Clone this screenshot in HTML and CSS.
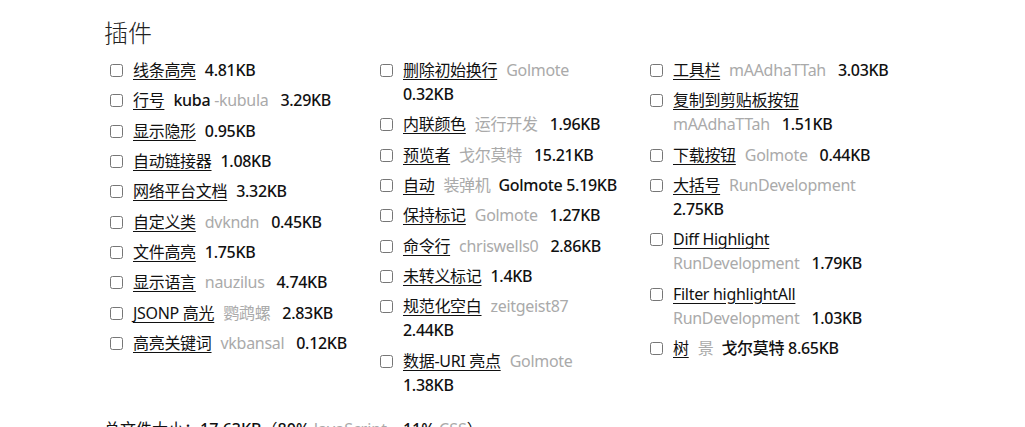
FILE: index.html
```html
<!DOCTYPE html>
<html lang="zh">
<head>
    <meta charset="UTF-8">
    <meta name="viewport" content="width=device-width, initial-scale=1.0">
    <title>插件</title>
    <link rel="stylesheet" href="styles.css">
</head>
<body>

    <div class="page">
        <h2>插件</h2>

        <div class="plugins">
            <ul class="col">
                <li><input type="checkbox"><div class="info"><a href="#">线条高亮</a><span class="size">4.81KB</span></div></li>
                <li><input type="checkbox"><div class="info"><a href="#">行号</a><span class="author"><b>kuba</b> -kubula</span><span class="size">3.29KB</span></div></li>
                <li><input type="checkbox"><div class="info"><a href="#">显示隐形</a><span class="size">0.95KB</span></div></li>
                <li><input type="checkbox"><div class="info"><a href="#">自动链接器</a><span class="size">1.08KB</span></div></li>
                <li><input type="checkbox"><div class="info"><a href="#">网络平台文档</a><span class="size">3.32KB</span></div></li>
                <li><input type="checkbox"><div class="info"><a href="#">自定义类</a><span class="author">dvkndn</span><span class="size">0.45KB</span></div></li>
                <li><input type="checkbox"><div class="info"><a href="#">文件高亮</a><span class="size">1.75KB</span></div></li>
                <li><input type="checkbox"><div class="info"><a href="#">显示语言</a><span class="author">nauzilus</span><span class="size">4.74KB</span></div></li>
                <li><input type="checkbox"><div class="info"><a href="#">JSONP 高光</a><span class="author">鹦鹉螺</span><span class="size">2.83KB</span></div></li>
                <li><input type="checkbox"><div class="info"><a href="#">高亮关键词</a><span class="author">vkbansal</span><span class="size">0.12KB</span></div></li>
            </ul>
            <ul class="col">
                <li><input type="checkbox"><div class="info"><a href="#">删除初始换行</a><span class="author">Golmote</span><span class="size">0.32KB</span></div></li>
                <li><input type="checkbox"><div class="info"><a href="#">内联颜色</a><span class="author">运行开发</span><span class="size">1.96KB</span></div></li>
                <li><input type="checkbox"><div class="info"><a href="#">预览者</a><span class="author">戈尔莫特</span><span class="size">15.21KB</span></div></li>
                <li><input type="checkbox"><div class="info"><a href="#">自动</a><span class="author tight">装弹机</span><span class="size">Golmote 5.19KB</span></div></li>
                <li><input type="checkbox"><div class="info"><a href="#">保持标记</a><span class="author">Golmote</span><span class="size">1.27KB</span></div></li>
                <li><input type="checkbox"><div class="info"><a href="#">命令行</a><span class="author">chriswells0</span><span class="size">2.86KB</span></div></li>
                <li><input type="checkbox"><div class="info"><a href="#">未转义标记</a><span class="size">1.4KB</span></div></li>
                <li><input type="checkbox"><div class="info"><a href="#">规范化空白</a><span class="author">zeitgeist87</span><span class="size">2.44KB</span></div></li>
                <li><input type="checkbox"><div class="info"><a href="#">数据-URI 亮点</a><span class="author">Golmote</span><span class="size">1.38KB</span></div></li>
            </ul>
            <ul class="col">
                <li><input type="checkbox"><div class="info"><a href="#">工具栏</a><span class="author">mAAdhaTTah</span><span class="size">3.03KB</span></div></li>
                <li><input type="checkbox"><div class="info"><a href="#">复制到剪贴板按钮</a><span class="author">mAAdhaTTah</span><span class="size">1.51KB</span></div></li>
                <li><input type="checkbox"><div class="info"><a href="#">下载按钮</a><span class="author">Golmote</span><span class="size">0.44KB</span></div></li>
                <li><input type="checkbox"><div class="info"><a href="#">大括号</a><span class="author">RunDevelopment</span><span class="size">2.75KB</span></div></li>
                <li><input type="checkbox"><div class="info"><a href="#">Diff Highlight</a><span class="author">RunDevelopment</span><span class="size">1.79KB</span></div></li>
                <li><input type="checkbox"><div class="info"><a href="#">Filter highlightAll</a><span class="author">RunDevelopment</span><span class="size">1.03KB</span></div></li>
                <li><input type="checkbox"><div class="info"><a href="#">树</a><span class="author tight">景</span><span class="size">戈尔莫特 8.65KB</span></div></li>
            </ul>
        </div>

        <p class="total">总文件大小：<strong>17.63KB</strong>（<strong>80%</strong> <span class="muted">JavaScript</span>，<strong>11%</strong> <span class="muted">CSS</span>）</p>
    </div>

</body>
</html>
```

FILE: styles.css
```css
body {
    margin: 0;
    padding: 0;
    background-color: #fff;
    color: #111;
    font-family: "Noto Sans", "Noto Sans CJK SC", sans-serif;
    font-size: 16px;
}
.page {
    padding: 17px 0 0 104px;
}
h2 {
    margin: 0;
    font-family: "Noto Sans CJK SC", sans-serif;
    font-size: 24px;
    font-weight: 300;
    line-height: 29px;
    color: #222;
}
.plugins {
    display: flex;
    margin-top: 12px;
}
.col {
    list-style: none;
    margin: 0;
    padding: 0;
    width: 270px;
}
.col li {
    display: flex;
    align-items: flex-start;
    line-height: 24px;
    margin-bottom: 6.33px;
}
.col input[type="checkbox"] {
    width: 13px;
    height: 13px;
    margin: 6px 10px 0 6px;
    flex-shrink: 0;
}
.info {
    width: 222px;
    letter-spacing: -0.3px;
}
.info a {
    color: #111;
    text-decoration: underline;
    text-underline-offset: 3px;
    white-space: nowrap;
    margin-right: 9px;
    display: inline-block;
}
.author {
    color: #aaa;
    white-space: nowrap;
    margin-right: 12px;
    display: inline-block;
}
.author b {
    color: #111;
    font-weight: 500;
}
.author.tight {
    margin-right: 8px;
}
.size {
    font-weight: 500;
    white-space: nowrap;
    display: inline-block;
}
.total {
    margin: 14px 0 0;
    line-height: 24px;
}
.total strong {
    font-weight: 500;
}
.total .muted {
    color: #aaa;
}
```
